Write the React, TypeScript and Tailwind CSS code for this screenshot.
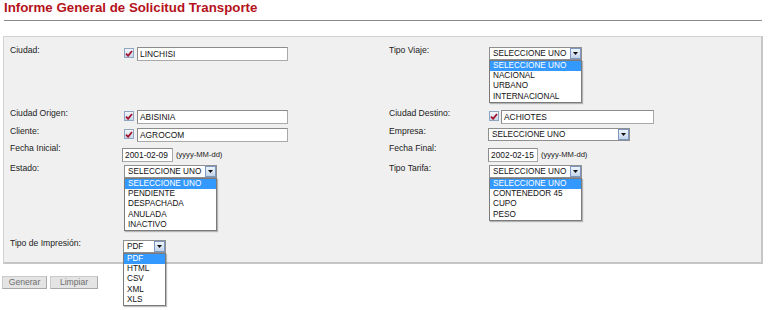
import React from "react";

function Check() {
  return (
    <div className="mt-[1px] flex h-[10px] w-[10px] shrink-0 items-center justify-center border border-[#8ea5c4] bg-gradient-to-b from-[#f4f8fc] to-[#c8d6e8]">
      <svg width="8" height="7" viewBox="0 0 8 7">
        <path d="M1 3.6 L3.1 5.8 L7 1" fill="none" stroke="#a3142c" strokeWidth="1.8" />
      </svg>
    </div>
  );
}

function TextBox({ value, w }: { value: string; w: string }) {
  return (
    <div
      className={`${w} flex h-[14px] items-center border border-[#a9a9a9] border-t-[#8c8c8c] border-l-[#8c8c8c] bg-white pl-[2px] text-[8.4px] text-[#111]`}
    >
      {value}
    </div>
  );
}

function Arrow() {
  return (
    <div className="flex h-[11px] w-[11px] shrink-0 items-center justify-center border border-[#7c98c2] bg-gradient-to-b from-[#eef4fb] to-[#c3d4ea]">
      <svg width="5" height="3" viewBox="0 0 5 3">
        <path d="M0 0 L5 0 L2.5 3 Z" fill="#111" />
      </svg>
    </div>
  );
}

function SelectBox({ value, w }: { value: string; w: string }) {
  return (
    <div
      className={`${w} flex h-[13px] items-center justify-between border border-[#8f8f8f] bg-white pl-[3px] text-[8.2px] text-[#111]`}
    >
      <span className="leading-[11px]">{value}</span>
      <Arrow />
    </div>
  );
}

function List({ items, w }: { items: string[]; w: string }) {
  return (
    <div className={`${w} border border-[#7a7a7a] bg-white shadow-[1px_1px_1px_rgba(0,0,0,0.25)]`}>
      {items.map((it, i) => (
        <div
          key={it}
          className={`pl-[3px] text-[8.2px] leading-[10.2px] ${
            i === 0 ? "bg-[#3399ff] text-white" : "text-[#111]"
          }`}
        >
          {it}
        </div>
      ))}
    </div>
  );
}

function Label({ children }: { children: React.ReactNode }) {
  return <div className="-mt-[2px] text-[8.6px] leading-[10px] text-[#222]">{children}</div>;
}

export default function App() {
  return (
    <div className="relative h-[310px] w-[768px] overflow-hidden bg-white font-['Liberation_Sans',Arial,sans-serif]">
      <h1 className="px-[4px] pt-[0px] text-[13.3px] font-bold leading-[16px] text-[#b5121b]">
        Informe General de Solicitud Transporte
      </h1>
      <div className="mx-[4px] mt-[4px] w-[758px] border-t border-[#8a8a8a]" />

      <div className="ml-[3px] mt-[15px] w-[760px] border border-[#d2d2d2] border-r-2 border-b-2 border-r-[#c6c6c6] border-b-[#c6c6c6] bg-[#f0f0f0] pl-[6px] pt-[10px]">
        <div className="grid grid-cols-[112px_267px_99px_1fr] grid-rows-[63px_18px_17px_20px_75px_22px]">
          {/* Row 1 */}
          <Label>Ciudad:</Label>
          <div className="flex items-start gap-[3px] pl-[2px]">
            <Check />
            <TextBox value="LINCHISI" w="w-[151px]" />
          </div>
          <Label>Tipo Viaje:</Label>
          <div className="pl-[1px]">
            <SelectBox value="SELECCIONE UNO" w="w-[93px]" />
            <List w="w-[93px]" items={["SELECCIONE UNO", "NACIONAL", "URBANO", "INTERNACIONAL"]} />
          </div>

          {/* Row 2 */}
          <Label>Ciudad Origen:</Label>
          <div className="flex items-start gap-[3px] pl-[2px]">
            <Check />
            <TextBox value="ABISINIA" w="w-[151px]" />
          </div>
          <Label>Ciudad Destino:</Label>
          <div className="flex items-start gap-[2px] pl-[1px]">
            <Check />
            <TextBox value="ACHIOTES" w="w-[153px]" />
          </div>

          {/* Row 3 */}
          <Label>Cliente:</Label>
          <div className="flex items-start gap-[3px] pl-[2px]">
            <Check />
            <TextBox value="AGROCOM" w="w-[151px]" />
          </div>
          <Label>Empresa:</Label>
          <div className="pl-[0px]">
            <SelectBox value="SELECCIONE UNO" w="w-[142px]" />
          </div>

          {/* Row 4 */}
          <Label>Fecha Inicial:</Label>
          <div className="flex items-center gap-[3px]">
            <TextBox value="2001-02-09" w="w-[51px]" />
            <span className="text-[7.6px] text-[#222]">(yyyy-MM-dd)</span>
          </div>
          <Label>Fecha Final:</Label>
          <div className="flex items-center gap-[3px]">
            <TextBox value="2002-02-15" w="w-[50px]" />
            <span className="text-[7.6px] text-[#222]">(yyyy-MM-dd)</span>
          </div>

          {/* Row 5 */}
          <Label>Estado:</Label>
          <div className="pl-[2px]">
            <SelectBox value="SELECCIONE UNO" w="w-[93px]" />
            <List
              w="w-[93px]"
              items={["SELECCIONE UNO", "PENDIENTE", "DESPACHADA", "ANULADA", "INACTIVO"]}
            />
          </div>
          <Label>Tipo Tarifa:</Label>
          <div className="pl-[1px]">
            <SelectBox value="SELECCIONE UNO" w="w-[93px]" />
            <List w="w-[93px]" items={["SELECCIONE UNO", "CONTENEDOR 45", "CUPO", "PESO"]} />
          </div>

          {/* Row 6 */}
          <Label>Tipo de Impresión:</Label>
          <div className="relative pl-[1px]">
            <SelectBox value="PDF" w="w-[43px]" />
            <div className="absolute left-[1px] top-[13px] z-10">
              <List w="w-[43px]" items={["PDF", "HTML", "CSV", "XML", "XLS"]} />
            </div>
          </div>
          <div />
          <div />
        </div>
      </div>

      <div className="ml-[2px] mt-[12px] flex gap-[3px]">
        <button className="h-[13px] w-[45px] border border-[#c9c9c9] border-b-[#a9a9a9] border-r-[#a9a9a9] bg-[#e4e4e4] text-[8.6px] leading-[11px] text-[#6e6e6e]">
          Generar
        </button>
        <button className="h-[13px] w-[48px] border border-[#c9c9c9] border-b-[#a9a9a9] border-r-[#a9a9a9] bg-[#e4e4e4] text-[8.6px] leading-[11px] text-[#6e6e6e]">
          Limpiar
        </button>
      </div>
    </div>
  );
}
